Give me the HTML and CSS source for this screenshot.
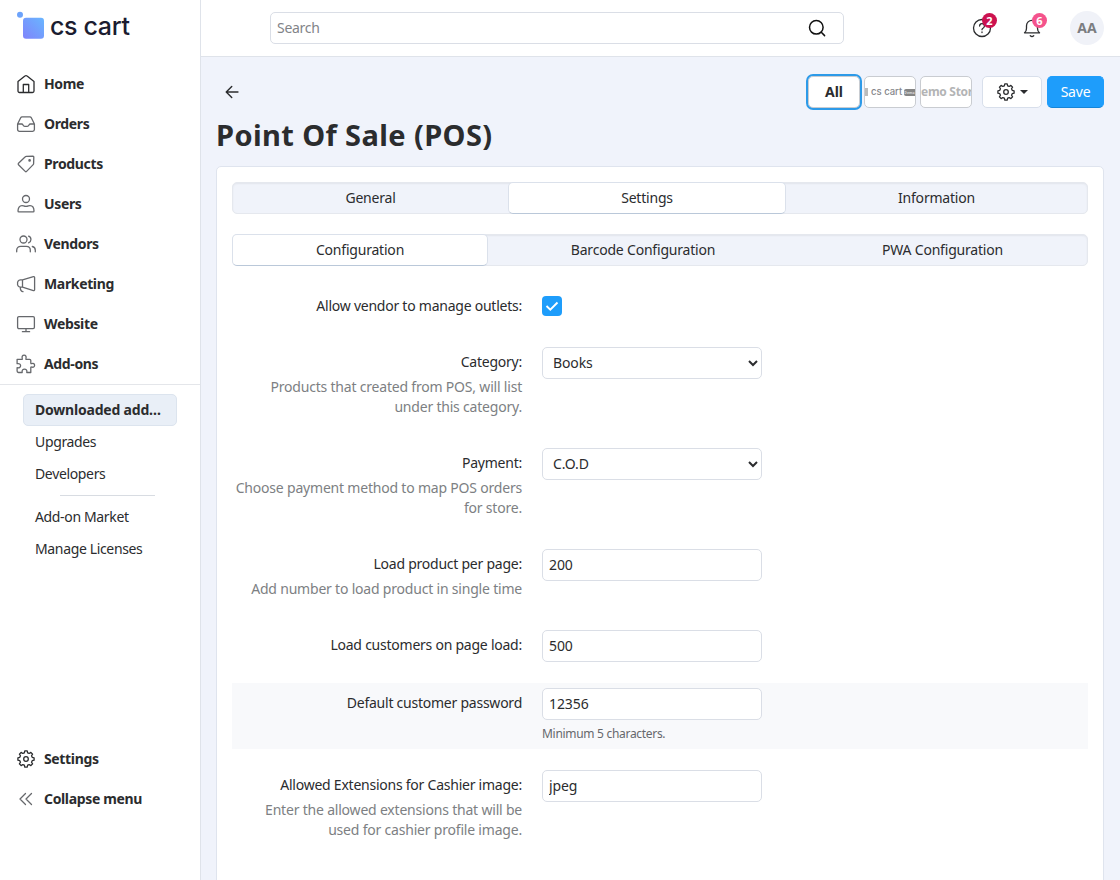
FILE: index.html
```html
<!DOCTYPE html>
<html lang="en">
<head>
<meta charset="utf-8">
<title>Point Of Sale (POS)</title>
<link rel="stylesheet" href="styles.css">
</head>
<body>
<div class="admin">

	<aside class="sidebar">
		<a class="logo" href="#">
			<svg width="28" height="28" viewBox="0 0 28 28">
				<defs>
					<linearGradient id="logo-fill" x1="1" y1="0" x2="0" y2="1">
						<stop offset="0" stop-color="#69b6ff"/>
						<stop offset="1" stop-color="#7f83fb"/>
					</linearGradient>
				</defs>
				<circle cx="4" cy="3.8" r="3" fill="#6da3fb"/>
				<rect x="7" y="6.8" width="21" height="21" rx="3" fill="url(#logo-fill)"/>
			</svg>
			<span class="logo-text">cs cart</span>
		</a>

		<ul class="menu">
			<li><a class="menu-item dark" href="#">
				<svg class="icon" viewBox="0 0 20 20"><path d="M2 7.600 8.900 2.100a1.700 1.700 0 0 1 2.200 0L18 7.600V17a1.500 1.500 0 0 1-1.500 1.500h-13A1.500 1.500 0 0 1 2 17zM7.300 18.500v-8h5.400v8"/></svg>
				<span>Home</span></a></li>
			<li><a class="menu-item" href="#">
				<svg class="icon" viewBox="0 0 20 20"><path d="M1.600 10 4.700 3.700A1.600 1.600 0 0 1 6.200 2.800h7.600a1.600 1.600 0 0 1 1.500.9L18.400 10v5.500a1.800 1.800 0 0 1-1.800 1.800H3.400a1.800 1.800 0 0 1-1.800-1.800zM1.600 10h4c.7 0 1.100.4 1.400 1 .4.900.9 1.400 1.800 1.400h2.400c.9 0 1.400-.5 1.800-1.400.3-.6.700-1 1.400-1h4"/></svg>
				<span>Orders</span></a></li>
			<li><a class="menu-item" href="#">
				<svg class="icon" viewBox="0 0 20 20"><path d="M10.200 2.400 17 2.200a.8.8 0 0 1 .8.8l-.2 6.800a1.200 1.200 0 0 1-.4.800l-6.600 6.800a1 1 0 0 1-1.400 0L2.500 10.700a1 1 0 0 1 0-1.400l6.800-6.500a1.300 1.300 0 0 1 .9-.4z"/><circle cx="13.600" cy="6.400" r=".7"/></svg>
				<span>Products</span></a></li>
			<li><a class="menu-item" href="#">
				<svg class="icon" viewBox="0 0 20 20"><circle cx="10" cy="5" r="3.500"/><path d="M2 17c0-3.200 1.500-5.400 4-5.400 1.300 0 2 .8 4 .8s2.700-.8 4-.8c2.500 0 4 2.200 4 5.400 0 .6-.3.900-.9.900H2.900c-.6 0-.9-.3-.9-.9z"/></svg>
				<span>Users</span></a></li>
			<li><a class="menu-item" href="#">
				<svg class="icon" viewBox="0 0 20 20"><circle cx="7.500" cy="5.500" r="3.500"/><path d="M.7 17.800v-1.600c0-2.300 1.700-3.900 4-3.900h5.600c2.300 0 4 1.600 4 3.900v1.600M12.600 2.200a3.500 3.500 0 0 1 0 6.600M16.300 12.500c1.900.5 3 1.900 3 3.700v1.600"/></svg>
				<span>Vendors</span></a></li>
			<li><a class="menu-item" href="#">
				<svg class="icon" viewBox="0 0 20 20"><path d="M6.500 5.800 17.400 2.600a1 1 0 0 1 1.200.9v12.200a1 1 0 0 1-1.200.9L6.500 13.200zM6.500 5.800H4.300a3 3 0 0 0-2.700 3.700 3 3 0 0 0 2.700 3.700h2.200M4.200 13.400c.2 2.600 1 4.100 2.800 4.300"/></svg>
				<span>Marketing</span></a></li>
			<li><a class="menu-item" href="#">
				<svg class="icon" viewBox="0 0 20 20"><rect x="1.600" y="2.600" width="16.800" height="12" rx="1.300"/><path d="M10 14.600v3M6.400 17.700h7.200"/></svg>
				<span>Website</span></a></li>
			<li><a class="menu-item" href="#">
				<svg class="icon" viewBox="0 0 20 20"><path d="M1.100 5.300h4.700c.5 0 .7-.3.500-.8-.7-1.900.2-3.300 1.800-3.300s2.500 1.400 1.800 3.300c-.2.500 0 .8.500.8h3.200c.8 0 1.200.4 1.200 1.200v2.600c0 .5.300.7.800.5 1.800-.7 3 .2 3 1.700s-1.200 2.400-3 1.700c-.5-.2-.8 0-.8.500v5h-4c.5-2.300-.8-3.400-2.300-3.400s-2.800 1.100-2.300 3.400H2.500c-.9 0-1.400-.5-1.400-1.400v-3.400c2.300.5 3.500-.6 3.500-2s-1.200-2.500-3.500-2z"/></svg>
				<span>Add-ons</span></a></li>
		</ul>

		<ul class="submenu">
			<li><a class="active" href="#">Downloaded add-ons</a></li>
			<li><a href="#">Upgrades</a></li>
			<li><a href="#">Developers</a></li>
			<li class="divider"></li>
			<li><a href="#">Add-on Market</a></li>
			<li><a href="#">Manage Licenses</a></li>
		</ul>

		<ul class="menu menu-bottom">
			<li><a class="menu-item dark" href="#">
				<svg class="icon" viewBox="0 0 20 20"><use href="#gear"/></svg>
				<span>Settings</span></a></li>
			<li><a class="menu-item" href="#">
				<svg class="icon" viewBox="0 0 20 20"><path d="M9.500 4.500 4 10l5.500 5.500M15.500 4.500 10 10l5.500 5.500"/></svg>
				<span>Collapse menu</span></a></li>
		</ul>
	</aside>

	<div class="main">
		<header class="topbar">
			<form class="search">
				<input type="text" placeholder="Search">
				<svg class="icon search-icon" viewBox="0 0 20 20"><circle cx="9.300" cy="9.300" r="6.800"/><path d="m14.300 14.300 3.300 3.300"/></svg>
			</form>
			<div class="topbar-right">
				<a class="notify" href="#">
					<svg class="icon" viewBox="0 0 20 20"><circle cx="10" cy="10" r="8.500"/><path d="M7.600 8a2.400 2.400 0 1 1 3.700 2c-.9.500-1.300.9-1.300 1.700M10 14v.5"/></svg>
					<span class="badge">2</span>
				</a>
				<a class="notify" href="#">
					<svg class="icon" viewBox="0 0 20 20"><path d="M2.500 14.800c1.500-1 2-2.300 2-4.500V7.800a5.500 5.500 0 0 1 11 0v2.500c0 2.200.5 3.500 2 4.500zM8.300 17.700c.9.800 2.500.8 3.400 0"/></svg>
					<span class="badge pink">6</span>
				</a>
				<a class="avatar" href="#">AA</a>
			</div>
		</header>

		<div class="content">
			<div class="actions">
				<a class="back" href="#"><svg class="icon" viewBox="0 0 20 20"><path d="M16.600 10H4M9.700 3.900 3.600 10l6.100 6.100"/></svg></a>
				<div class="storefronts">
					<a class="store current" href="#">All</a>
					<a class="store store-default" href="#"><i class="store-square"></i><span class="store-logo">cs cart</span><b class="store-tag">Demo</b></a>
					<a class="store" href="#"><span class="store-name">Demo Store</span></a>
				</div>
				<a class="btn btn-gear" href="#">
					<svg class="icon" viewBox="0 0 20 20"><g id="gear"><path d="M8.350 3.800 8.800 1.900H11.200L11.650 3.800 13.220 4.450 14.880 3.420 16.580 5.120 15.550 6.780 16.200 8.350 18.100 8.800V11.200L16.200 11.650 15.550 13.220 16.580 14.880 14.880 16.580 13.220 15.550 11.650 16.200 11.200 18.100H8.800L8.350 16.200 6.780 15.550 5.120 16.580 3.420 14.880 4.450 13.220 3.800 11.650 1.900 11.200V8.800L3.800 8.350 4.450 6.780 3.420 5.120 5.120 3.420 6.780 4.450z"/><circle cx="10" cy="10" r="2.300"/></g></svg>
					<i class="caret"></i>
				</a>
				<button class="btn btn-primary" type="button">Save</button>
			</div>
			<h1>Point Of Sale (POS)</h1>

			<div class="card">
				<ul class="tabs tabs-main">
					<li>General</li>
					<li class="active">Settings</li>
					<li>Information</li>
				</ul>
				<ul class="tabs tabs-sub">
					<li class="active">Configuration</li>
					<li>Barcode Configuration</li>
					<li>PWA Configuration</li>
				</ul>

				<form class="settings">
					<div class="group group-check">
						<div class="label"><label>Allow vendor to manage outlets:</label></div>
						<div class="control">
							<span class="checkbox"><svg viewBox="0 0 20 20"><path d="m4.500 10 3.800 3.700 7.200-7.200"/></svg></span>
						</div>
					</div>
					<div class="group">
						<div class="label"><label>Category:</label>
							<p>Products that created from POS, will list under this category.</p></div>
						<div class="control"><select><option>Books</option></select></div>
					</div>
					<div class="group">
						<div class="label"><label>Payment:</label>
							<p>Choose payment method to map POS orders for store.</p></div>
						<div class="control"><select><option>C.O.D</option></select></div>
					</div>
					<div class="group">
						<div class="label"><label>Load product per page:</label>
							<p>Add number to load product in single time</p></div>
						<div class="control"><input type="text" value="200"></div>
					</div>
					<div class="group">
						<div class="label"><label>Load customers on page load:</label></div>
						<div class="control"><input type="text" value="500"></div>
					</div>
					<div class="group hover">
						<div class="label"><label>Default customer password</label></div>
						<div class="control"><input type="text" value="12356">
							<div class="hint">Minimum 5 characters.</div></div>
					</div>
					<div class="group">
						<div class="label"><label>Allowed Extensions for Cashier image:</label>
							<p>Enter the allowed extensions that will be used for cashier profile image.</p></div>
						<div class="control"><input type="text" value="jpeg"></div>
					</div>
				</form>
			</div>
		</div>
	</div>

</div>
</body>
</html>
```
FILE: styles.css
```css
* {
	box-sizing: border-box;
}
body {
	margin: 0;
	font: 14px/20px "Noto Sans", sans-serif;
	color: #2b2c2e;
	background: #f0f3fb;
}
a {
	color: inherit;
	text-decoration: none;
}
ul {
	list-style: none;
	margin: 0;
	padding: 0;
}
.admin {
	display: flex;
	height: 880px;
	overflow: hidden;
}
.icon {
	width: 20px;
	height: 20px;
	flex: none;
	fill: none;
	stroke: currentColor;
	stroke-width: 1.3;
	stroke-linecap: round;
	stroke-linejoin: round;
}

/* sidebar */
.sidebar {
	display: flex;
	flex-direction: column;
	width: 201px;
	flex: none;
	background: #fff;
	border-right: 1px solid #dfe3ea;
}
.logo {
	display: flex;
	height: 64px;
	padding: 11px 0 0 16px;
	gap: 6px;
}
.logo-text {
	font: 500 25px/30px Inter, sans-serif;
	letter-spacing: -0.35px;
	color: #1b1c30;
}
.menu-item {
	display: flex;
	align-items: center;
	gap: 8px;
	height: 40px;
	padding-left: 16px;
	font-weight: 700;
	letter-spacing: -0.35px;
}
.menu-item .icon {
	color: #66686c;
}
.menu-item.dark .icon {
	color: #2b2c2e;
}
.submenu {
	border-top: 1px solid #e4e6ea;
	padding: 9px 23px 0;
}
.submenu a {
	display: block;
	height: 32px;
	padding: 5px 11px;
	border: 1px solid transparent;
	border-radius: 5px;
	letter-spacing: -0.35px;
	overflow: hidden;
	white-space: nowrap;
	text-overflow: ellipsis;
}
.submenu .active {
	font-weight: 700;
	letter-spacing: -0.2px;
	background: #e9eff7;
	border-color: #dce4ee;
}
.submenu .divider {
	height: 1px;
	margin: 5px 22px 5px 37px;
	background: #d8dce2;
}
.menu-bottom {
	margin-top: auto;
	padding-bottom: 61px;
}

/* top bar */
.main {
	flex: 1;
	min-width: 0;
}
.topbar {
	display: flex;
	justify-content: space-between;
	height: 57px;
	padding: 12px 16px 0 69px;
	background: #fff;
	border-bottom: 1px solid #dfe3ea;
}
.search {
	display: flex;
	align-items: center;
	width: 574px;
	height: 32px;
	padding: 0 16px 0 6px;
	border: 1px solid #dadee6;
	border-radius: 5px;
}
.search input {
	flex: 1;
	padding: 0;
	border: 0;
	outline: 0;
	font: inherit;
	letter-spacing: -0.3px;
}
.search input::placeholder {
	color: #828488;
}
.search-icon {
	color: #111;
	stroke-width: 1.5;
}
.topbar-right {
	display: flex;
	align-items: center;
	height: 32px;
}
.notify {
	position: relative;
	display: flex;
	width: 20px;
	margin-right: 30px;
}
.notify + .avatar {
	margin-left: -2px;
}
.badge {
	position: absolute;
	left: 10px;
	top: -5px;
	width: 15px;
	height: 15px;
	border-radius: 8px;
	background: #cc1250;
	color: #fff;
	font-size: 11px;
	line-height: 15px;
	font-weight: 700;
	text-align: center;
}
.badge.pink {
	background: #f4538c;
}
.avatar {
	width: 34px;
	height: 34px;
	border-radius: 50%;
	background: #f0f2f8;
	color: #7b7d81;
	font-weight: 700;
	line-height: 34px;
	text-align: center;
}

/* page heading */
.content {
	padding: 19px 16px 0 15px;
}
.actions {
	display: flex;
	height: 32px;
}
.back {
	display: flex;
	align-items: center;
	padding-left: 7px;
	margin-right: auto;
}
.back .icon {
	width: 18px;
	stroke-width: 1.6;
}
.storefronts {
	display: flex;
	gap: 4px;
}
.store {
	display: flex;
	align-items: center;
	justify-content: center;
	width: 52px;
	height: 32px;
	overflow: hidden;
	white-space: nowrap;
	background: #fff;
	border: 1px solid #c9ccd1;
	border-radius: 5px;
	color: #999;
}
.store.current {
	font-weight: 700;
	color: #2b2c2e;
	outline: 2px solid #2d9ae8;
}
.store-default {
	justify-content: flex-start;
}
.store-square {
	flex: none;
	width: 3px;
	height: 8px;
	background: #bbb;
}
.store-logo {
	flex: none;
	width: 33px;
	margin: 0 0 0 3px;
	font: 500 9.5px/12px Inter, sans-serif;
	color: #85868a;
}
.store-tag {
	flex: none;
	width: 11px;
	height: 7px;
	border-radius: 2px 0 0 2px;
	background: #858585;
	color: #ddd;
	font-size: 3.5px;
	line-height: 7px;
	text-align: center;
}
.store-name {
	font-size: 12px;
	font-weight: 700;
	letter-spacing: -0.3px;
	color: #b3b4b5;
}
.btn {
	display: flex;
	align-items: center;
	justify-content: center;
	height: 32px;
	border: 1px solid #d8dfeb;
	border-radius: 5px;
	background: #fff;
	font: inherit;
}
.btn-gear {
	width: 60px;
	margin: 0 5px 0 10px;
	gap: 4px;
}
.caret {
	border: 4px solid transparent;
	border-top-color: #2b2c2e;
	border-bottom: 0;
}
.btn-primary {
	width: 57px;
	padding: 0;
	background: #1e9dfb;
	border-color: #1e9dfb #1e9dfb #1585d8;
	color: #fff;
	letter-spacing: -0.2px;
}
h1 {
	margin: 7px 0 11px;
	font-size: 29px;
	line-height: 40px;
	letter-spacing: 0.4px;
}

/* card */
.card {
	height: 740px;
	padding: 15px;
	background: #fff;
	border: 1px solid #dfe4ee;
	border-radius: 5px 5px 0 0;
}
.tabs {
	display: grid;
	height: 32px;
	margin-bottom: 20px;
	background: #f0f3fa;
	border: 1px solid #e5e8ee;
	border-radius: 5px;
	box-shadow: inset 0 1px 2px rgba(0, 0, 0, 0.06);
	letter-spacing: -0.2px;
}
.tabs-main {
	grid-template-columns: 275px 278px 1fr;
}
.tabs-sub {
	grid-template-columns: 255px 310px 1fr;
}
.tabs li {
	height: 32px;
	margin-top: -1px;
	line-height: 32px;
	text-align: center;
}
.tabs .active {
	background: #fff;
	border: 1px solid #dbe1eb;
	border-bottom-color: #bac8d9;
	border-radius: 5px;
	line-height: 30px;
}
.tabs-sub .active {
	margin-left: -1px;
}

/* form */
.group {
	display: flex;
	gap: 20px;
	padding: 5px 0;
	margin-bottom: 16px;
}
.group-check {
	margin-bottom: 21px;
}
.group.hover {
	background: #f8f9fb;
}
.label {
	width: 290px;
	padding-top: 5px;
	text-align: right;
}
.label label {
	display: block;
	white-space: nowrap;
	letter-spacing: -0.24px;
}
.label p {
	margin: 5px 0;
	color: #7d7f83;
	letter-spacing: -0.2px;
}
.control input,
.control select {
	display: block;
	width: 220px;
	height: 32px;
	padding: 3px 6px 5px;
	border: 1px solid #dadee6;
	border-radius: 5px;
	background: #fff;
	color: #2b2c2e;
	font: inherit;
	letter-spacing: -0.1px;
}
.control select {
	padding: 3px 0 5px 6px;
}
.checkbox {
	display: block;
	width: 20px;
	height: 20px;
	margin-top: 5px;
	border-radius: 4px;
	background: #1e9dfb;
}
.checkbox svg {
	display: block;
	fill: none;
	stroke: #fff;
	stroke-width: 1.9;
}
.hint {
	margin-top: 4px;
	font-size: 12px;
	letter-spacing: -0.3px;
	color: #66686c;
}
```
